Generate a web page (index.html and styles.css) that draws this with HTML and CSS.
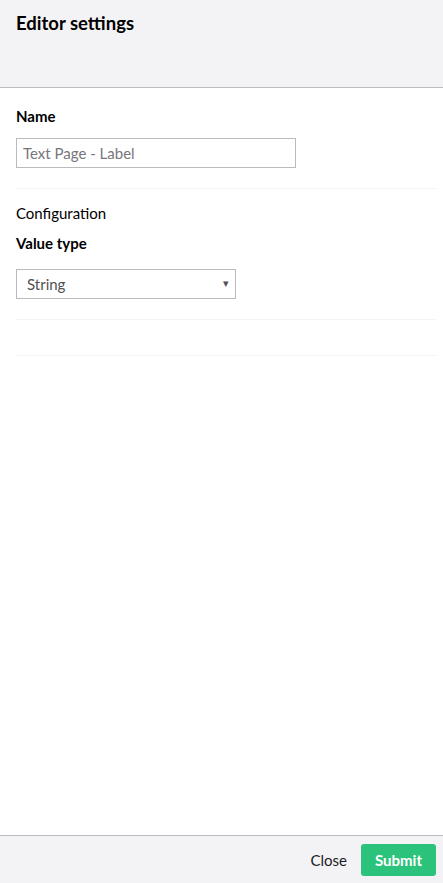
FILE: index.html
```html
<!DOCTYPE html>
<html lang="en">
<head>
<meta charset="utf-8">
<title>Editor settings</title>
<link rel="stylesheet" href="styles.css">
</head>
<body>
<div class="panel">
  <header class="panel-header">
    <h1 class="panel-title">Editor settings</h1>
  </header>
  <main class="panel-body">
    <section class="group">
      <label class="field-label" for="name">Name</label>
      <input class="text-input" id="name" type="text" value="Text Page - Label">
    </section>
    <section class="group config">
      <div class="group-title">Configuration</div>
      <label class="field-label" for="vtype">Value type</label>
      <div class="select-wrap">
        <select class="select" id="vtype">
          <option>String</option>
        </select>
        <span class="select-arrow">&#9662;</span>
      </div>
    </section>
    <section class="group empty"></section>
  </main>
  <footer class="panel-footer">
    <button class="btn-link" type="button">Close</button>
    <button class="btn-success" type="button">Submit</button>
  </footer>
</div>
</body>
</html>
```
FILE: styles.css
```css
* { box-sizing: border-box; }
html, body { margin: 0; padding: 0; height: 100%; }
body {
  font-family: Lato, "Open Sans", "Liberation Sans", sans-serif;
  color: #1b264f;
  background: #fff;
}
.panel {
  display: flex;
  flex-direction: column;
  height: 883px;
}
.panel-header {
  height: 88px;
  background: #f3f3f5;
  border-bottom: 1px solid #bbbabf;
  padding: 12px 16px 0;
}
.panel-title {
  margin: 0;
  font-size: 18.5px;
  font-weight: 700;
  line-height: 22px;
  color: #000;
}
.panel-body {
  flex: 1;
  padding: 0 7px 0 16px;
}
.group {
  border-bottom: 1px solid #f3f3f5;
  padding: 18px 0 20px;
}
.group.config { padding-top: 14px; }
.group.empty { padding: 0; height: 36px; }
.field-label {
  display: block;
  font-size: 15px;
  font-weight: 700;
  line-height: 20px;
  color: #000;
  margin-bottom: 12px;
}
.group-title {
  font-size: 15px;
  font-weight: 400;
  line-height: 20px;
  color: #000;
  margin: 0 0 10px;
}
.text-input {
  display: block;
  width: 280px;
  height: 30px;
  border: 1px solid #bbbabf;
  padding: 0 6px;
  font-family: inherit;
  font-size: 15px;
  color: #77767b;
  background: #fff;
  outline: none;
}
.select-wrap {
  position: relative;
  width: 220px;
  margin-top: 16px;
}
.select {
  display: block;
  width: 220px;
  height: 30px;
  border: 1px solid #bbbabf;
  border-radius: 0;
  padding: 0 10px;
  font-family: inherit;
  font-size: 15px;
  color: #515054;
  background: #fff;
  -webkit-appearance: none;
  appearance: none;
  outline: none;
}
.select-arrow {
  position: absolute;
  right: 7px;
  top: 7px;
  font-size: 11px;
  color: #515054;
  pointer-events: none;
}
.panel-footer {
  height: 48px;
  background: #f3f3f5;
  border-top: 1px solid #bbbabf;
  display: flex;
  align-items: center;
  justify-content: flex-end;
  padding: 0 7px 0 16px;
  gap: 14px;
}
.btn-link {
  border: 0;
  background: transparent;
  font-family: inherit;
  font-size: 15px;
  color: #1b1b1d;
  padding: 0;
}
.btn-success {
  border: 0;
  border-radius: 3px;
  background: #2bc37c;
  color: #fff;
  font-family: inherit;
  font-size: 15px;
  font-weight: 700;
  height: 32px;
  width: 75px;
  padding: 0;
}
```
